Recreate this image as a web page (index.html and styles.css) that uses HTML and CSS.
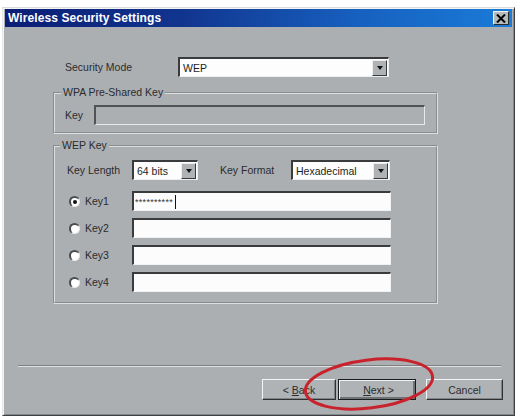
FILE: index.html
```html
<!DOCTYPE html>
<html>
<head>
<meta charset="utf-8">
<link rel="stylesheet" href="styles.css">
</head>
<body>
<div class="window">
  <div class="titlebar">
    <span class="title">Wireless Security Settings</span>
    <span class="close"><svg width="10" height="9" viewBox="0 0 10 9"><path d="M1 0.5 L9 8.5 M9 0.5 L1 8.5" stroke="#000" stroke-width="2"/></svg></span>
  </div>
  <div class="client">
    <div class="mode-row">
      <span class="mode-label">Security Mode</span>
      <div class="select sel-mode"><span class="sel-text">WEP</span><span class="arrow"><i></i></span></div>
    </div>

    <fieldset class="group wpa">
      <legend>WPA Pre-Shared Key</legend>
      <div class="row">
        <span class="key-label">Key</span>
        <div class="input disabled w-wpa"></div>
      </div>
    </fieldset>

    <fieldset class="group wep">
      <legend>WEP Key</legend>
      <div class="row">
        <span class="len-label">Key Length</span>
        <div class="select sel-len"><span class="sel-text">64 bits</span><span class="arrow"><i></i></span></div>
        <span class="fmt-label">Key Format</span>
        <div class="select sel-fmt"><span class="sel-text">Hexadecimal</span><span class="arrow"><i></i></span></div>
      </div>
      <div class="row keyrow first">
        <span class="radio checked"><i></i></span><span class="radio-label">Key1</span>
        <div class="input w-key"><span class="mask">**********</span><span class="caret"></span></div>
      </div>
      <div class="row keyrow">
        <span class="radio"><i></i></span><span class="radio-label">Key2</span>
        <div class="input w-key"></div>
      </div>
      <div class="row keyrow">
        <span class="radio"><i></i></span><span class="radio-label">Key3</span>
        <div class="input w-key"></div>
      </div>
      <div class="row keyrow">
        <span class="radio"><i></i></span><span class="radio-label">Key4</span>
        <div class="input w-key"></div>
      </div>
    </fieldset>

    <div class="separator"></div>

    <div class="buttons">
      <button class="btn btn-back">&lt; <u>B</u>ack</button>
      <button class="btn btn-next">&nbsp;<u>N</u>ext &gt;</button>
      <button class="btn btn-cancel">Cancel</button>
    </div>
  </div>
  <svg class="highlight" width="150" height="70" viewBox="0 0 150 70">
    <ellipse cx="75" cy="35" rx="64" ry="24" fill="none" stroke="#c8232c" stroke-width="3" transform="rotate(-7 75 35)"/>
  </svg>
</div>
</body>
</html>
```

FILE: styles.css
```css
html, body {
  margin: 0;
  padding: 0;
  background: #ffffff;
}
body {
  font-family: "Liberation Sans", Arial, sans-serif;
  font-size: 10.5px;
  color: #2a2c2e;
}
.window {
  position: relative;
  margin: 7px 0 0 2px;
  width: 513px;
  height: 409px;
  box-sizing: border-box;
  background: #acafb2;
  border-top: 1px solid #d8dadc;
  border-left: 1px solid #e4e6e8;
  border-right: 1px solid #3c3e40;
  border-bottom: 1px solid #3c3e40;
  box-shadow: inset 1px 1px 0 #f2f3f4, inset -1px -1px 0 #85888b;
  padding: 1px 2px 0 2px;
}
.titlebar {
  height: 18px;
  display: flex;
  align-items: center;
  justify-content: space-between;
  background: linear-gradient(90deg, #0c1e75 0%, #11358f 35%, #1761c0 70%, #1a7bd8 100%);
  padding: 0 3px 0 3px;
}
.title {
  color: #ffffff;
  font-weight: bold;
  font-size: 12px;
  letter-spacing: 0.1px;
}
.close {
  width: 16px;
  height: 14px;
  box-sizing: border-box;
  background: #b7babd;
  border-top: 1px solid #f2f2f2;
  border-left: 1px solid #f2f2f2;
  border-right: 1px solid #2a2a2a;
  border-bottom: 1px solid #2a2a2a;
  display: flex;
  align-items: center;
  justify-content: center;
}
.client {
  display: flex;
  flex-direction: column;
}
.mode-row {
  display: flex;
  align-items: center;
  margin-top: 30px;
  padding-left: 60px;
}
.mode-label {
  width: 113px;
}
.select {
  height: 20px;
  box-sizing: border-box;
  background: #fdfdfd;
  border-top: 2px solid #3a3b3d;
  border-left: 2px solid #3a3b3d;
  border-right: 1px solid #eceeef;
  border-bottom: 1px solid #eceeef;
  display: flex;
  align-items: center;
  justify-content: space-between;
  color: #1e1f20;
}
.sel-text {
  padding-left: 3px;
}
.arrow {
  width: 15px;
  height: 16px;
  box-sizing: border-box;
  background: #b0b3b6;
  border-top: 1px solid #eeeeee;
  border-left: 1px solid #eeeeee;
  border-right: 1px solid #3a3a3a;
  border-bottom: 1px solid #3a3a3a;
  margin-right: 1px;
  display: flex;
  align-items: center;
  justify-content: center;
}
.arrow i {
  width: 0;
  height: 0;
  border-left: 3px solid transparent;
  border-right: 3px solid transparent;
  border-top: 4px solid #111;
}
.sel-mode { width: 211px; }
.sel-len { width: 66px; }
.sel-fmt { width: 99px; }

.group {
  margin: 0 0 0 48px;
  width: 385px;
  box-sizing: border-box;
  border: 2px groove #dcdee0;
  min-inline-size: 0;
}
.group legend {
  padding: 0 2px;
  line-height: 13px;
  height: 13px;
}
.wpa {
  margin-top: 9px;
  padding: 6px 10px 7px 10px;
}
.wpa legend { margin-left: -4px; }
.wep {
  margin-top: 5px;
  padding: 8px 10px 10px 12px;
}
.wep legend { margin-left: -7px; }
.row {
  display: flex;
  align-items: center;
  height: 20px;
}
.key-label {
  width: 29px;
}
.input {
  height: 20px;
  box-sizing: border-box;
  background: #fcfcfd;
  border-top: 2px solid #3a3b3d;
  border-left: 2px solid #3a3b3d;
  border-right: 1px solid #f0f1f2;
  border-bottom: 1px solid #f0f1f2;
  display: flex;
  align-items: center;
}
.input.disabled {
  background: #acafb2;
  border-top: 2px solid #505254;
  border-left: 2px solid #505254;
  border-right: 1px solid #e6e8ea;
  border-bottom: 1px solid #e6e8ea;
}
.w-wpa { width: 331px; }
.w-key { width: 259px; }
.len-label {
  width: 65px;
}
.fmt-label {
  margin-left: 22px;
  width: 71px;
}
.keyrow {
  margin-top: 7px;
}
.keyrow.first {
  margin-top: 11px;
}
.radio {
  width: 11px;
  height: 11px;
  box-sizing: border-box;
  border-radius: 50%;
  background: #ffffff;
  border-top: 2px solid #4a4b4d;
  border-left: 2px solid #4a4b4d;
  border-right: 1px solid #e8e8e8;
  border-bottom: 1px solid #e8e8e8;
  margin-left: 2px;
  display: flex;
  align-items: center;
  justify-content: center;
}
.radio.checked i {
  width: 4px;
  height: 4px;
  border-radius: 50%;
  background: #111;
}
.radio-label {
  margin-left: 5px;
  width: 47px;
}
.mask {
  font-size: 9px;
  letter-spacing: 0.3px;
  padding-left: 1px;
  color: #333;
}
.caret {
  width: 1px;
  height: 14px;
  background: #111;
  margin-left: 2px;
}
.separator {
  margin: 61px 0 0 13px;
  width: 483px;
  height: 1px;
  background: #7d8083;
  border-bottom: 1px solid #dfe1e3;
}
.buttons {
  display: flex;
  margin-top: 12px;
  padding-left: 257px;
}
.btn {
  height: 21px;
  box-sizing: border-box;
  font-family: "Liberation Sans", Arial, sans-serif;
  font-size: 10.5px;
  color: #2a2c2e;
  background: #b0b3b6;
  border-top: 1px solid #f3f4f5;
  border-left: 1px solid #f3f4f5;
  border-right: 1px solid #2e3032;
  border-bottom: 1px solid #2e3032;
  box-shadow: inset -1px -1px 0 #808386;
  padding: 0;
  margin: 0;
}
.btn-back { width: 74px; }
.btn-next {
  width: 78px;
  margin-left: 2px;
  border: 1px solid #1a1b1c;
  box-shadow: inset 1px 1px 0 #f0f1f2, inset -2px -2px 0 #6f7275;
}
.btn-cancel {
  width: 77px;
  margin-left: 10px;
}
.highlight {
  position: absolute;
  left: 291px;
  top: 341px;
}
```
